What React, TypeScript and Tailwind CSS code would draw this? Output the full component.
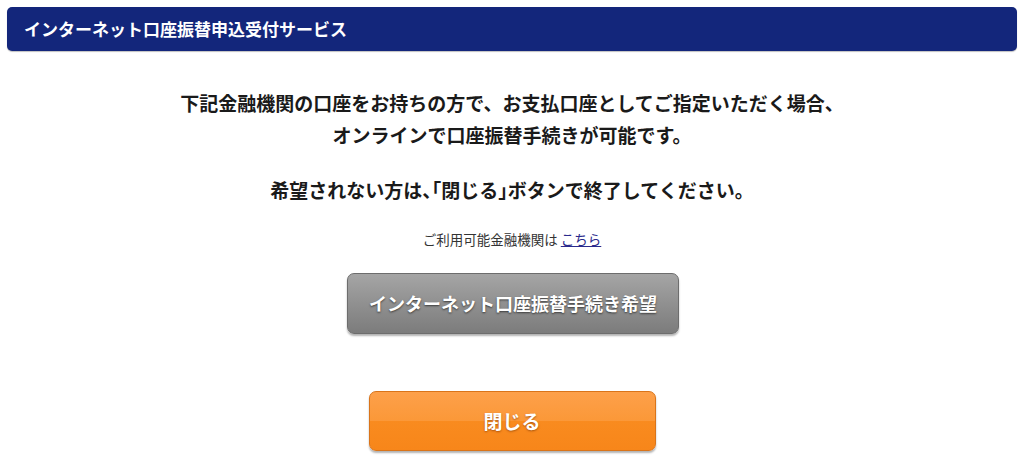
import React from "react";

const font = { fontFamily: '"Noto Sans CJK JP", "Noto Sans", sans-serif' };

export default function App() {
  return (
    <div className="w-[1024px] h-[474px] bg-white overflow-hidden" style={font}>
      <div className="px-[7px] pt-[7px]">
        <div className="h-[44px] rounded-[5px] bg-[#13267b] flex items-center pl-[17px] text-white text-[17px] font-bold shadow-[0_1px_1px_rgba(0,0,0,0.25)]">
          インターネット口座振替申込受付サービス
        </div>
      </div>
      <div className="flex flex-col items-center text-[#1a1a1a]">
        <p className="mt-[36px] text-[19px] font-bold leading-[32px] text-center">
          下記金融機関の口座をお持ちの方で、お支払口座としてご指定いただく場合、
          <br />
          オンラインで口座振替手続きが可能です。
        </p>
        <p className="mt-[23px] text-[19px] font-bold leading-[32px] text-center">
          希望されない方は<span className="[font-feature-settings:'halt']">、「</span>閉じる<span className="[font-feature-settings:'halt']">」</span>ボタンで終了してください。
        </p>
        <p className="mt-[24px] text-[13.5px] leading-[18px] text-[#333]">
          ご利用可能金融機関は <a className="text-[#2a2a8c] underline">こちら</a>
        </p>
        <button className="mt-[25px] w-[332px] h-[61px] rounded-[7px] bg-gradient-to-b from-[#a5a5a5] to-[#7c7c7c] border border-[#6d6d6d] shadow-[0_2px_2px_rgba(0,0,0,0.3)] text-white text-[18px] font-bold [text-shadow:0_1px_2px_rgba(0,0,0,0.6)] ml-[2px]">
          インターネット口座振替手続き希望
        </button>
        <button className="mt-[57px] w-[287px] h-[60px] rounded-[7px] bg-[linear-gradient(to_bottom,#fda04a_0%,#fb9838_50%,#f98b1f_50%,#f7861a_100%)] border border-[#d9741a] shadow-[0_2px_2px_rgba(0,0,0,0.3)] text-white text-[19px] font-bold [text-shadow:0_1px_2px_rgba(120,50,0,0.6)]">
          閉じる
        </button>
      </div>
    </div>
  );
}
